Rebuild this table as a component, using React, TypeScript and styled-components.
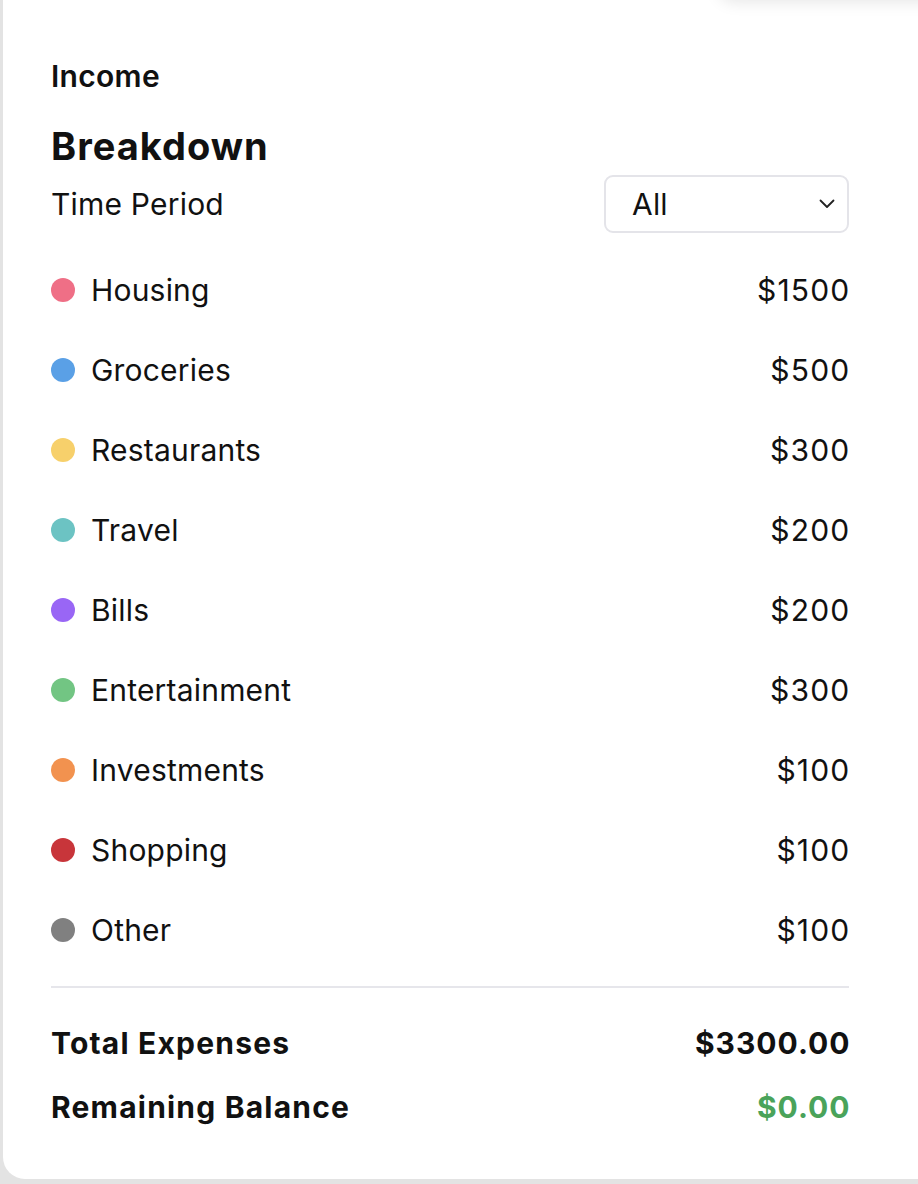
import React from 'react'
import styled, {createGlobalStyle} from 'styled-components'

const GlobalStyle = createGlobalStyle`
    body {
        margin: 0;
        background: #e3e3e3;
        font-family: Inter, "Noto Sans", sans-serif;
        color: #111;
        overflow: hidden;
    }
`;

const Card = styled.section`
    position: relative;
    margin: 0 0 4px 3px;
    background: #fff;
    border-bottom-left-radius: 22px;
    padding: 59px 69px 52px 48px;
`;

const TopShade = styled.div`
    position: absolute;
    top: -60px;
    right: -40px;
    width: 240px;
    height: 60px;
    background: #fff;
    border-radius: 16px;
    box-shadow: 0 2px 16px rgba(0, 0, 0, 0.1);
`;

const Income = styled.h3`
    margin: 0 0 31px;
    font-size: 30px;
    line-height: 34px;
    font-weight: 600;
    letter-spacing: 0.3px;
`;

const Heading = styled.h2`
    margin: 0 0 7px;
    font-size: 38px;
    line-height: 44px;
    font-weight: 700;
    letter-spacing: 1px;
`;

const PeriodRow = styled.div`
    display: flex;
    justify-content: space-between;
    align-items: center;
    margin-bottom: 17px;
    font-size: 30px;
    letter-spacing: 0.2px;
`;

const SelectBox = styled.div`
    box-sizing: border-box;
    width: 245px;
    height: 58px;
    display: flex;
    align-items: center;
    justify-content: space-between;
    padding: 0 12px 0 26px;
    border: 2px solid #e4e4e9;
    border-radius: 9px;
    font-size: 30px;
`;

const List = styled.ul`
    list-style: none;
    margin: 0;
    padding: 0;
`;

const Row = styled.li`
    height: 80px;
    display: flex;
    align-items: center;
    justify-content: space-between;
    font-size: 30px;
    letter-spacing: 0.2px;
`;

const Label = styled.span`
    display: flex;
    align-items: center;
    gap: 16px;
`;

const Amount = styled.span`
    letter-spacing: 1.2px;
    margin-right: -1.5px;
`;

const Dot = styled.span<{$color: string}>`
    width: 24px;
    height: 24px;
    border-radius: 50%;
    background: ${(p) => p.$color};
`;

const Divider = styled.hr`
    margin: 16px 0 35px;
    border: none;
    border-top: 2px solid #e6e6eb;
`;

const Summary = styled.div`
    display: flex;
    flex-direction: column;
    gap: 24px;
`;

const SummaryRow = styled.div<{$accent?: string}>`
    height: 40px;
    display: flex;
    align-items: center;
    justify-content: space-between;
    font-size: 30px;
    font-weight: 700;
    letter-spacing: 1.2px;

    span:last-child {
        letter-spacing: 1px;
        margin-right: -1.5px;
        color: ${(p) => p.$accent || '#111'};
    }
`;

const items = [
    {name: 'Housing', color: '#ef6f86', amount: 1500},
    {name: 'Groceries', color: '#5aa0e6', amount: 500},
    {name: 'Restaurants', color: '#f7d06b', amount: 300},
    {name: 'Travel', color: '#6cc3c3', amount: 200},
    {name: 'Bills', color: '#9966f5', amount: 200},
    {name: 'Entertainment', color: '#72c583', amount: 300},
    {name: 'Investments', color: '#f2924f', amount: 100},
    {name: 'Shopping', color: '#c8353a', amount: 100},
    {name: 'Other', color: '#808080', amount: 100},
];

export default function App(): JSX.Element {
    const total = items.reduce((s, i) => s + i.amount, 0);
    return <>
        <GlobalStyle/>
        <Card>
            <TopShade/>
            <Income>Income</Income>
            <Heading>Breakdown</Heading>
            <PeriodRow>
                <span>Time Period</span>
                <SelectBox>
                    <span>All</span>
                    <svg width="16" height="10" viewBox="0 0 16 10" fill="none">
                        <path d="M1.5 1.5 L8 8 L14.5 1.5" stroke="#222" strokeWidth="1.8" strokeLinecap="round" strokeLinejoin="round"/>
                    </svg>
                </SelectBox>
            </PeriodRow>
            <List>
                {items.map((i) => <Row key={i.name}>
                    <Label><Dot $color={i.color}/>{i.name}</Label>
                    <Amount>${i.amount}</Amount>
                </Row>)}
            </List>
            <Divider/>
            <Summary>
                <SummaryRow><span>Total Expenses</span><span>${total.toFixed(2)}</span></SummaryRow>
                <SummaryRow $accent="#4aa35a"><span>Remaining Balance</span><span>$0.00</span></SummaryRow>
            </Summary>
        </Card>
    </>
}
